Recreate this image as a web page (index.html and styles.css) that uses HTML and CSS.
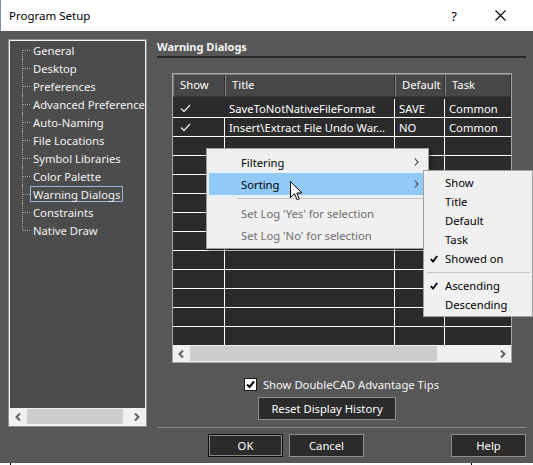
FILE: index.html
```html
<!DOCTYPE html>
<html>
<head>
<meta charset="utf-8">
<title>Program Setup</title>
<link rel="stylesheet" href="styles.css">
</head>
<body>
<div class="window">
  <div class="titlebar">
    <span class="title">Program Setup</span>
    <span class="tb-btn tb-help">?</span>
    <span class="tb-btn tb-close"><svg width="11" height="11" viewBox="0 0 11 11"><path d="M0.5 0.5 L10.5 10.5 M10.5 0.5 L0.5 10.5" stroke="#000" stroke-width="1.1" fill="none"/></svg></span>
  </div>
  <div class="main">
    <div class="content">
      <div class="tree">
        <ul class="tree-list">
          <li class="tree-item"><span class="conn"></span><span class="label">General</span></li>
          <li class="tree-item"><span class="conn"></span><span class="label">Desktop</span></li>
          <li class="tree-item"><span class="conn"></span><span class="label">Preferences</span></li>
          <li class="tree-item"><span class="conn"></span><span class="label">Advanced Preferences</span></li>
          <li class="tree-item"><span class="conn"></span><span class="label">Auto-Naming</span></li>
          <li class="tree-item"><span class="conn"></span><span class="label">File Locations</span></li>
          <li class="tree-item"><span class="conn"></span><span class="label">Symbol Libraries</span></li>
          <li class="tree-item"><span class="conn"></span><span class="label">Color Palette</span></li>
          <li class="tree-item"><span class="conn"></span><span class="label selected">Warning Dialogs</span></li>
          <li class="tree-item"><span class="conn"></span><span class="label">Constraints</span></li>
          <li class="tree-item"><span class="conn"></span><span class="label">Native Draw</span></li>
        </ul>
        <div class="hscroll tree-scroll">
          <span class="sarrow"><svg width="7" height="8" viewBox="0 0 7 8"><path d="M5 0.5 L1.5 4 L5 7.5" stroke="#606060" stroke-width="2" fill="none"/></svg></span>
          <span class="track"><span class="thumb"></span></span>
          <span class="sarrow"><svg width="7" height="8" viewBox="0 0 7 8"><path d="M2 0.5 L5.5 4 L2 7.5" stroke="#606060" stroke-width="2" fill="none"/></svg></span>
        </div>
      </div>
      <div class="panel">
        <div class="heading">Warning Dialogs</div>
        <div class="rule"></div>
        <div class="grid">
          <div class="ghead">
            <span class="hcell">Show</span>
            <span class="hcell">Title</span>
            <span class="hcell">Default</span>
            <span class="hcell">Task</span>
          </div>
          <div class="gbody">
            <div class="grow">
              <span class="cell nofocusline"><svg class="chk" width="11" height="9" viewBox="0 0 11 9"><path d="M1 4.5 L4 7.5 L10 1" stroke="#e6e6e6" stroke-width="1.3" fill="none"/></svg></span>
              <span class="cell">SaveToNotNativeFileFormat</span>
              <span class="cell">SAVE</span>
              <span class="cell">Common</span>
            </div>
            <div class="grow">
              <span class="cell"><svg class="chk" width="11" height="9" viewBox="0 0 11 9"><path d="M1 4.5 L4 7.5 L10 1" stroke="#e6e6e6" stroke-width="1.3" fill="none"/></svg></span>
              <span class="cell">Insert\Extract File Undo War...</span>
              <span class="cell">NO</span>
              <span class="cell">Common</span>
            </div>
            <div class="grow"><span class="cell"></span><span class="cell"></span><span class="cell"></span><span class="cell"></span></div>
            <div class="grow"><span class="cell"></span><span class="cell"></span><span class="cell"></span><span class="cell"></span></div>
            <div class="grow"><span class="cell"></span><span class="cell"></span><span class="cell"></span><span class="cell"></span></div>
            <div class="grow"><span class="cell"></span><span class="cell"></span><span class="cell"></span><span class="cell"></span></div>
            <div class="grow"><span class="cell"></span><span class="cell"></span><span class="cell"></span><span class="cell"></span></div>
            <div class="grow"><span class="cell"></span><span class="cell"></span><span class="cell"></span><span class="cell"></span></div>
            <div class="grow"><span class="cell"></span><span class="cell"></span><span class="cell"></span><span class="cell"></span></div>
            <div class="grow"><span class="cell"></span><span class="cell"></span><span class="cell"></span><span class="cell"></span></div>
            <div class="grow"><span class="cell"></span><span class="cell"></span><span class="cell"></span><span class="cell"></span></div>
            <div class="grow"><span class="cell"></span><span class="cell"></span><span class="cell"></span><span class="cell"></span></div>
            <div class="grow"><span class="cell"></span><span class="cell"></span><span class="cell"></span><span class="cell"></span></div>
          </div>
          <div class="hscroll grid-scroll">
            <span class="sarrow"><svg width="7" height="8" viewBox="0 0 7 8"><path d="M5 0.5 L1.5 4 L5 7.5" stroke="#606060" stroke-width="2" fill="none"/></svg></span>
            <span class="track"><span class="thumb"></span></span>
            <span class="sarrow"><svg width="7" height="8" viewBox="0 0 7 8"><path d="M2 0.5 L5.5 4 L2 7.5" stroke="#606060" stroke-width="2" fill="none"/></svg></span>
          </div>
        </div>
        <div class="tips">
          <span class="cbox"><svg width="11" height="11" viewBox="0 0 11 11"><path d="M2 5.5 L4.5 8 L9 2.5" stroke="#000" stroke-width="2" fill="none"/></svg></span>
          <span>Show DoubleCAD Advantage Tips</span>
        </div>
        <button class="btn reset">Reset Display History</button>
        <div class="sep"></div>
      </div>
    </div>
    <div class="buttons">
      <button class="btn btn-default">OK</button>
      <button class="btn btn-cancel">Cancel</button>
      <button class="btn btn-help">Help</button>
    </div>
  </div>
  <div class="footer"><span class="tick tick-a"></span><span class="tick tick-b"></span></div>
</div>

<div class="ctx">
  <div class="mi"><span class="mi-text">Filtering</span><svg class="mi-arrow" width="5" height="8" viewBox="0 0 5 8"><path d="M0.8 0.5 L4 4 L0.8 7.5" stroke="#333" stroke-width="1.1" fill="none"/></svg></div>
  <div class="mi hot"><span class="mi-text">Sorting</span><svg class="mi-arrow" width="5" height="8" viewBox="0 0 5 8"><path d="M0.8 0.5 L4 4 L0.8 7.5" stroke="#333" stroke-width="1.1" fill="none"/></svg></div>
  <div class="msep"></div>
  <div class="mi disabled"><span class="mi-text">Set Log 'Yes' for selection</span></div>
  <div class="mi disabled"><span class="mi-text">Set Log 'No' for selection</span></div>
</div>

<div class="submenu">
  <div class="si"><span class="si-check"></span><span>Show</span></div>
  <div class="si"><span class="si-check"></span><span>Title</span></div>
  <div class="si"><span class="si-check"></span><span>Default</span></div>
  <div class="si"><span class="si-check"></span><span>Task</span></div>
  <div class="si"><span class="si-check"><svg width="8" height="8" viewBox="0 0 8 8"><path d="M0.8 4 L3 6.5 L7.2 1" stroke="#000" stroke-width="1.8" fill="none"/></svg></span><span>Showed on</span></div>
  <div class="ssep"></div>
  <div class="si"><span class="si-check"><svg width="8" height="8" viewBox="0 0 8 8"><path d="M0.8 4 L3 6.5 L7.2 1" stroke="#000" stroke-width="1.8" fill="none"/></svg></span><span>Ascending</span></div>
  <div class="si"><span class="si-check"></span><span>Descending</span></div>
</div>

<svg class="cursor" width="13" height="20" viewBox="0 0 13 20"><path d="M0.5 0.5 L0.5 16.5 L4.5 12.8 L7.2 18.8 L9.4 17.8 L6.8 12 L11.8 12 Z" fill="#fff" stroke="#000" stroke-width="1"/></svg>
</body>
</html>
```

FILE: styles.css
```css
html, body {
  margin: 0;
  padding: 0;
}
body {
  width: 533px;
  height: 465px;
  overflow: hidden;
  background: #ffffff;
  font-family: "Noto Sans", "Open Sans", sans-serif;
  font-size: 11.25px;
  position: relative;
}
ul { margin: 0; padding: 0; list-style: none; }

.window {
  display: flex;
  flex-direction: column;
  height: 465px;
}

/* title bar */
.titlebar {
  height: 31px;
  flex: none;
  background: #ffffff;
  display: flex;
  align-items: center;
  box-sizing: border-box;
  border-left: 1px solid #7c8ea8;
}
.title {
  padding-left: 8px;
  color: #000;
  font-size: 11.5px;
}
.tb-btn {
  width: 46px;
  height: 31px;
  display: flex;
  align-items: center;
  justify-content: center;
  color: #000;
}
.tb-help {
  margin-left: auto;
  font-size: 13px;
}
.tb-close {
  margin-right: 10px;
}

/* main area */
.main {
  height: 432px;
  flex: none;
  background: #575757;
  box-sizing: border-box;
  padding: 8px 7px 0 8px;
  display: flex;
  flex-direction: column;
}
.content {
  display: flex;
  height: 389px;
  flex: none;
}

/* tree */
.tree {
  width: 137px;
  height: 386px;
  margin: 1px 0 0 1px;
  box-sizing: border-box;
  border: 1px solid #f4f4f4;
  outline: 1px solid #8e8e8e;
  background: #4c4c4c;
  display: flex;
  flex-direction: column;
  flex: none;
}
.tree-list {
  flex: 1;
  overflow: hidden;
}
.tree-item {
  height: 18px;
  display: flex;
  align-items: center;
  white-space: nowrap;
}
.conn {
  width: 8px;
  height: 18px;
  margin-left: 12px;
  flex: none;
  position: relative;
}
.conn::before {
  content: "";
  position: absolute;
  left: 0;
  top: 0;
  bottom: 0;
  border-left: 1px dotted #a6a6a6;
}
.tree-item:first-child .conn::before { top: 9px; }
.tree-item:last-child .conn::before { bottom: 9px; }
.conn::after {
  content: "";
  position: absolute;
  left: 1px;
  top: 9px;
  width: 7px;
  border-top: 1px dotted #a6a6a6;
}
.label {
  height: 16px;
  line-height: 15px;
  padding: 0 2px;
  box-sizing: border-box;
  border: 1px solid transparent;
  color: #f2f2f2;
}
.label.selected {
  border-color: #9cb5dc;
}

/* scrollbars */
.hscroll {
  height: 17px;
  flex: none;
  background: #f0f0f0;
  display: flex;
  align-items: center;
}
.sarrow {
  width: 17px;
  height: 17px;
  display: flex;
  align-items: center;
  justify-content: center;
  flex: none;
}
.track {
  flex: 1;
  height: 15px;
  display: flex;
}
.thumb {
  background: #cdcdcd;
  height: 15px;
}
.tree-scroll .thumb { width: 96px; }
.grid-scroll .thumb { width: 247px; }

/* right panel */
.panel {
  width: 369px;
  margin-left: 11px;
  display: flex;
  flex-direction: column;
  flex: none;
}
.heading {
  height: 15px;
  line-height: 15px;
  font-weight: bold;
  color: #f4f4f4;
  font-size: 11px;
  margin-bottom: 2px;
}
.rule {
  height: 2px;
  background: #262626;
}

/* grid */
.grid {
  width: 340px;
  height: 290px;
  margin: 15px 0 0 15px;
  box-sizing: border-box;
  border: 1px solid #a6a6a6;
  background: #2b2b2b;
  display: flex;
  flex-direction: column;
}
.ghead {
  height: 25px;
  flex: none;
  display: grid;
  grid-template-columns: 52px 170px 50px 66px;
  align-items: start;
}
.hcell {
  height: 23px;
  box-sizing: border-box;
  background: #474747;
  border: 1px solid #7d7d7d;
  border-right-color: #333;
  border-bottom-color: #3a3a3a;
  color: #fff;
  line-height: 20px;
  padding-left: 6px;
}
.gbody {
  flex: 1;
  overflow: hidden;
}
.grow {
  height: 19px;
  box-sizing: border-box;
  border-bottom: 1px solid #ffffff;
  display: grid;
  grid-template-columns: 52px 170px 50px 66px;
}
.cell {
  box-sizing: border-box;
  border-right: 1px solid #ffffff;
  color: #ffffff;
  line-height: 19px;
  padding-left: 4px;
  white-space: nowrap;
  overflow: hidden;
  display: flex;
  align-items: center;
}
.cell:last-child { border-right: none; }
.cell.nofocusline { border-right-color: transparent; }
.chk { margin-left: 3px; }

/* tips checkbox */
.tips {
  height: 16px;
  margin-top: 13px;
  display: flex;
  align-items: center;
  justify-content: center;
  color: #f4f4f4;
  gap: 6px;
}
.cbox {
  width: 13px;
  height: 13px;
  box-sizing: border-box;
  border: 1px solid #1a1a1a;
  background: #ffffff;
  display: flex;
  align-items: center;
  justify-content: center;
}

/* buttons */
.btn {
  font: inherit;
  color: #ffffff;
  background: #2b2b2b;
  border: 1px solid #8e8e8e;
  height: 23px;
  padding: 0;
  margin: 0;
  box-sizing: border-box;
}
.reset {
  width: 138px;
  margin: 5px 0 0 101px;
  align-self: flex-start;
}
.sep {
  height: 1px;
  margin-top: 7px;
  background: #8a8a8a;
}
.buttons {
  display: flex;
  margin-top: 6px;
  height: 23px;
}
.btn-default {
  width: 75px;
  margin-left: 200px;
  border-color: #0c0c0c;
  box-shadow: inset 0 0 0 1px #8a8a8a;
}
.btn-cancel {
  width: 75px;
  margin-left: 6px;
}
.btn-help {
  width: 75px;
  margin-left: auto;
}

/* bottom strip */
.footer {
  flex: 1;
  display: flex;
  background: #ffffff;
}
.tick {
  width: 1px;
  background: #000;
}
.tick-a { margin-left: 10px; }
.tick-b { margin-left: 460px; }

/* context menu */
.ctx {
  position: absolute;
  left: 206px;
  top: 148px;
  width: 223px;
  box-sizing: border-box;
  background: #f0f0f0;
  border: 1px solid #a0a0a0;
  padding: 2px 3px 2px 2px;
  box-shadow: 2px 2px 3px rgba(0, 0, 0, 0.45);
  color: #000;
}
.mi {
  height: 22px;
  display: flex;
  align-items: center;
  padding-left: 32px;
  padding-right: 6px;
}
.mi.hot { background: #91c9f7; }
.mi.disabled { color: #6d6d6d; }
.mi-arrow { margin-left: auto; }
.msep {
  height: 1px;
  background: #c4c4c4;
  margin: 3px 0 3px 28px;
}

/* submenu */
.submenu {
  position: absolute;
  left: 423px;
  top: 170px;
  width: 110px;
  box-sizing: border-box;
  background: #f0f0f0;
  border: 1px solid #a0a0a0;
  padding: 2px;
  color: #000;
}
.si {
  height: 19px;
  display: flex;
  align-items: center;
  white-space: nowrap;
}
.si-check {
  width: 19px;
  padding-left: 4px;
  box-sizing: border-box;
  display: flex;
  align-items: center;
  flex: none;
}
.ssep {
  height: 1px;
  background: #c4c4c4;
  margin: 4px 0 3px 1px;
}

/* mouse pointer */
.cursor {
  position: absolute;
  left: 290px;
  top: 181px;
}
```
